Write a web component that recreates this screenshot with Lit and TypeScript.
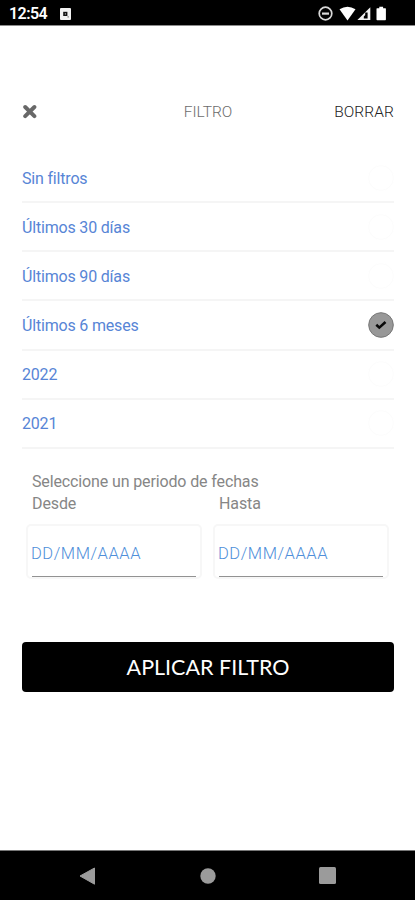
import { LitElement, html, svg, css } from "lit";
import { customElement, property, state } from "lit/decorators.js";

@customElement("status-bar")
class StatusBar extends LitElement {
  static styles = css`
    :host {
      display: flex;
      align-items: center;
      height: 26px;
      flex: none;
      background: #000;
      color: #fff;
      border-bottom: 1px solid #8c8c8c;
      box-sizing: border-box;
      padding: 2px 25px 0 9px;
    }
    .time {
      font-size: 16px;
      font-weight: 600;
      line-height: 20px;
      width: 51px;
      letter-spacing: -0.55px;
    }
    svg { display: block; }
    .right { margin-left: auto; }
  `;
  render() {
    return html`
      <span class="time">12:54</span>
      <svg width="11" height="12" viewBox="0 0 11 12">
        <rect width="11" height="12" rx="1" fill="#f2f2f2" />
        <path d="M3.2 3.8h4.2v4.2H3.2z" fill="#111" />
        <rect x="4.8" y="5.2" width="1.2" height="1.4" fill="#999" />
        <rect x="7.4" y="8.4" width="1.6" height="1" fill="#777" />
      </svg>
      <svg class="right" width="72" height="16" viewBox="0 0 72 16">
        <circle cx="7.5" cy="7.5" r="6.3" fill="none" stroke="#d8d8d8" stroke-width="1.7" />
        <rect x="4" y="6.5" width="7" height="2.2" fill="#d8d8d8" />
        <path d="M21.5 3.2Q29.5-1.8 37.5 3.2L29.5 14.5z" fill="#fff" />
        <path d="M52.3 1.2V14H39.4z" fill="#f2f2f2" />
        <path d="M49.6 6.5V12.5H45.8V10.5L47.2 8.9V6.5z" fill="#000" />
        <path d="M59 2.3h2.3V.7h3.8v1.6h2.3q.5 0 .5.6V13.6q0 .7-.7.7h-8q-.7 0-.7-.7V2.9q0-.6.5-.6z" fill="#fff" />
      </svg>
    `;
  }
}

@customElement("filter-option")
class FilterOption extends LitElement {
  @property() label = "";
  @property({ type: Boolean }) selected = false;
  static styles = css`
    :host {
      display: flex;
      align-items: center;
      justify-content: space-between;
      height: 49.15px;
      box-sizing: border-box;
      border-bottom: 2px solid #f5f5f5;
      color: #5785d6;
      font-size: 16px;
      font-weight: 400;
      letter-spacing: -0.18px;
      cursor: pointer;
    }
    .label { padding-top: 1px; }
    .mark { display: block; }
    .ring { fill: none; stroke: #fcfcfc; }
    .disc { fill: #989898; stroke: #777; }
    .tick { fill: none; stroke: #080808; stroke-width: 2.6; }
  `;
  render() {
    return html`
      <span class="label">${this.label}</span>
      <svg class="mark" width="26" height="26" viewBox="0 0 26 26">
        <circle class=${this.selected ? "disc" : "ring"} cx="13" cy="13" r="12.3" />
        ${this.selected ? svg`<path class="tick" d="M8.3 12.8L11.3 15.6L17.5 10" />` : null}
      </svg>
    `;
  }
}

@customElement("date-field")
class DateField extends LitElement {
  @property() label = "";
  static styles = css`
    :host { display: block; width: 176px; }
    .label {
      padding-left: 6px;
      height: 22px;
      line-height: 22px;
      font-size: 16px;
      font-weight: 400;
      color: #868686;
      letter-spacing: -0.1px;
    }
    .box {
      margin-top: 9px;
      height: 55px;
      box-sizing: border-box;
      border: 2px solid #f7f7f7;
      border-radius: 5px;
      padding: 0 4px;
    }
    .value {
      height: 51px;
      box-sizing: border-box;
      border-bottom: 1px solid #929292;
      padding-top: 5px;
      line-height: 46px;
      font-size: 16.5px;
      color: #4f8fda;
      letter-spacing: 0.55px;
      text-indent: -1px;
    }
  `;
  render() {
    return html`
      <div class="label">${this.label}</div>
      <div class="box"><div class="value">DD/MM/AAAA</div></div>
    `;
  }
}

@customElement("app-root")
class AppRoot extends LitElement {
  @state() private selected = 3;
  private options = ["Sin filtros", "Últimos 30 días", "Últimos 90 días", "Últimos 6 meses", "2022", "2021"];

  static styles = css`
    :host {
      display: flex;
      flex-direction: column;
      height: 900px;
      background: #fff;
      font-family: Roboto, sans-serif;
      font-weight: 350;
    }
    .content {
      flex: 1;
      display: flex;
      flex-direction: column;
      padding: 72px 21px 0 22px;
    }
    .head {
      display: grid;
      grid-template-columns: 1fr auto 1fr;
      align-items: center;
      height: 27px;
      font-size: 15.5px;
      color: #6c6c6c;
    }
    .head svg { display: block; }
    .clear { justify-self: end; color: #222; letter-spacing: 0.1px; }
    .list { margin-top: 29px; }
    .dates { padding: 22px 0 0 4px; }
    .hint {
      padding-left: 6px;
      height: 22px;
      line-height: 22px;
      font-size: 16px;
      font-weight: 400;
      color: #868686;
      letter-spacing: -0.13px;
    }
    .fields { display: flex; gap: 11px; }
    .apply {
      margin-top: 63px;
      height: 50px;
      border-radius: 4px;
      background: #000;
      color: #fff;
      display: flex;
      align-items: center;
      justify-content: center;
      font-family: Lato, sans-serif;
      font-weight: 400;
      font-size: 21.5px;
    }
    .apply span { padding-top: 1px; }
    .nav {
      height: 50px;
      flex: none;
      box-sizing: border-box;
      border-top: 1px solid #777;
      background: #000;
      display: flex;
      justify-content: space-between;
      align-items: center;
      padding: 0 79px;
    }
  `;

  render() {
    return html`
      <status-bar></status-bar>
      <div class="content">
        <div class="head">
          <svg width="15" height="15" viewBox="0 0 15 15">
            <path d="M3.2 3L12.4 12.2M12.4 3L3.2 12.2" stroke="#686868" stroke-width="3.9" stroke-linecap="round" />
          </svg>
          <span class="title">FILTRO</span>
          <span class="clear">BORRAR</span>
        </div>
        <div class="list">
          ${this.options.map(
            (o, i) => html`<filter-option
              .label=${o}
              .selected=${i === this.selected}
              @click=${() => (this.selected = i)}
            ></filter-option>`
          )}
        </div>
        <div class="dates">
          <div class="hint">Seleccione un periodo de fechas</div>
          <div class="fields">
            <date-field label="Desde"></date-field>
            <date-field label="Hasta"></date-field>
          </div>
        </div>
        <div class="apply"><span>APLICAR FILTRO</span></div>
      </div>
      <div class="nav">
        <svg width="17" height="18" viewBox="0 0 17 18"><path d="M1 9L15.5 1V17.2z" fill="#9b9b9b" stroke="#9b9b9b" stroke-linejoin="round" /></svg>
        <svg width="16" height="16" viewBox="0 0 16 16"><circle cx="8" cy="8" r="7.7" fill="#9b9b9b" /></svg>
        <svg width="17" height="17" viewBox="0 0 17 17"><rect width="17" height="17" rx="1.5" fill="#9b9b9b" /></svg>
      </div>
    `;
  }
}
